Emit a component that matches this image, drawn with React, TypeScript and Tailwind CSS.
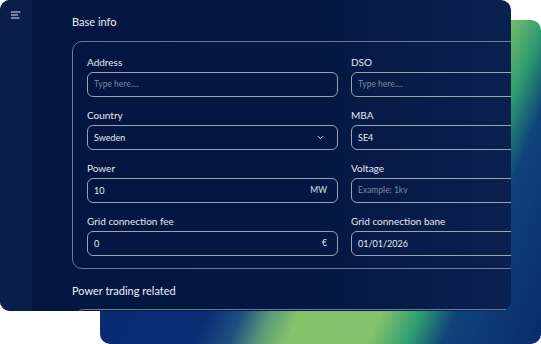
import { ChevronDown } from 'lucide-react'

type Field = {
  label: string
  value?: string
  placeholder?: string
  suffix?: string
  select?: boolean
}

const rows: [Field, Field][] = [
  [
    { label: 'Address', placeholder: 'Type here....' },
    { label: 'DSO', placeholder: 'Type here....' },
  ],
  [
    { label: 'Country', value: 'Sweden', select: true },
    { label: 'MBA', value: 'SE4' },
  ],
  [
    { label: 'Power', value: '10', suffix: 'MW' },
    { label: 'Voltage', placeholder: 'Example: 1kv' },
  ],
  [
    { label: 'Grid connection fee', value: '0', suffix: '€' },
    { label: 'Grid connection bane', value: '01/01/2026' },
  ],
]

const FormField = ({ field }: { field: Field }) => (
  <div className="flex flex-col w-[251px] shrink-0">
    <span className="text-[10px] leading-[11px] text-[#e6e9f0] h-[11px]">{field.label}</span>
    <div className="mt-[4px] h-[25px] rounded-[6px] border border-[#9aa3b6] flex items-center pl-[6px] pr-[10px]">
      {field.value ? (
        <span className="flex-1 text-[9px] text-[#e8ebf2]">{field.value}</span>
      ) : (
        <span className="flex-1 text-[8.5px] text-[#7c879f]">{field.placeholder}</span>
      )}
      {field.suffix && <span className="text-[8.5px] text-[#dfe3ec]">{field.suffix}</span>}
      {field.select && <ChevronDown className="w-[9px] h-[9px] text-[#dfe3ec] mr-[2px]" strokeWidth={2.5} />}
    </div>
  </div>
)

export default function App() {
  return (
    <div
      className="relative w-[541px] h-[344px] bg-white overflow-hidden"
      style={{ fontFamily: 'Lato, "Open Sans", sans-serif' }}
    >
      {/* back card */}
      <div className="absolute left-[100px] top-[20px] w-[441px] h-[324px] rounded-[10px] bg-[linear-gradient(113deg,#0a2a72_0%,#0b2c74_40%,#1f4f80_46%,#5a9a78_51%,#86c46c_56%,#84c36b_70%,#2e9c70_77%,#0f437a_83%,#0a2a6e_100%)]" />

      {/* front panel */}
      <div className="absolute left-0 top-0 w-[511px] h-[311px] rounded-[10px] overflow-hidden flex bg-[linear-gradient(90deg,#021640_0%,#031742_60%,#0a2150_100%)]">
        {/* sidebar */}
        <div className="w-[33px] shrink-0 bg-[#0a1e4b] border-r border-[#061639] pt-[11px] pl-[11px]">
          <svg width="10" height="8" viewBox="0 0 10 8" fill="none" stroke="#e6e9f0" strokeWidth="1.1">
            <line x1="0" y1="1" x2="9.5" y2="1" />
            <line x1="0" y1="4" x2="7" y2="4" />
            <line x1="0" y1="7" x2="8.5" y2="7" />
          </svg>
        </div>

        {/* main */}
        <div className="flex-1 pl-[39px] pt-[15px]">
          <div className="text-[11px] leading-[14px] text-[#eef0f5]">Base info</div>
          <div className="mt-[12px] w-[560px] rounded-[10px] border border-[#6d7a98] pl-[14px] pt-[15px] pb-[12px] flex flex-col gap-[13px]">
            {rows.map((row, i) => (
              <div key={i} className="flex gap-[13px]">
                <FormField field={row[0]} />
                <FormField field={row[1]} />
              </div>
            ))}
          </div>
          <div className="mt-[15px] text-[11px] leading-[14px] text-[#eef0f5]">Power trading related</div>
          <div className="mt-[11px] ml-[2px] w-[560px] h-[40px] rounded-[10px] border border-[#6d7a98]" />
        </div>
      </div>
    </div>
  )
}
